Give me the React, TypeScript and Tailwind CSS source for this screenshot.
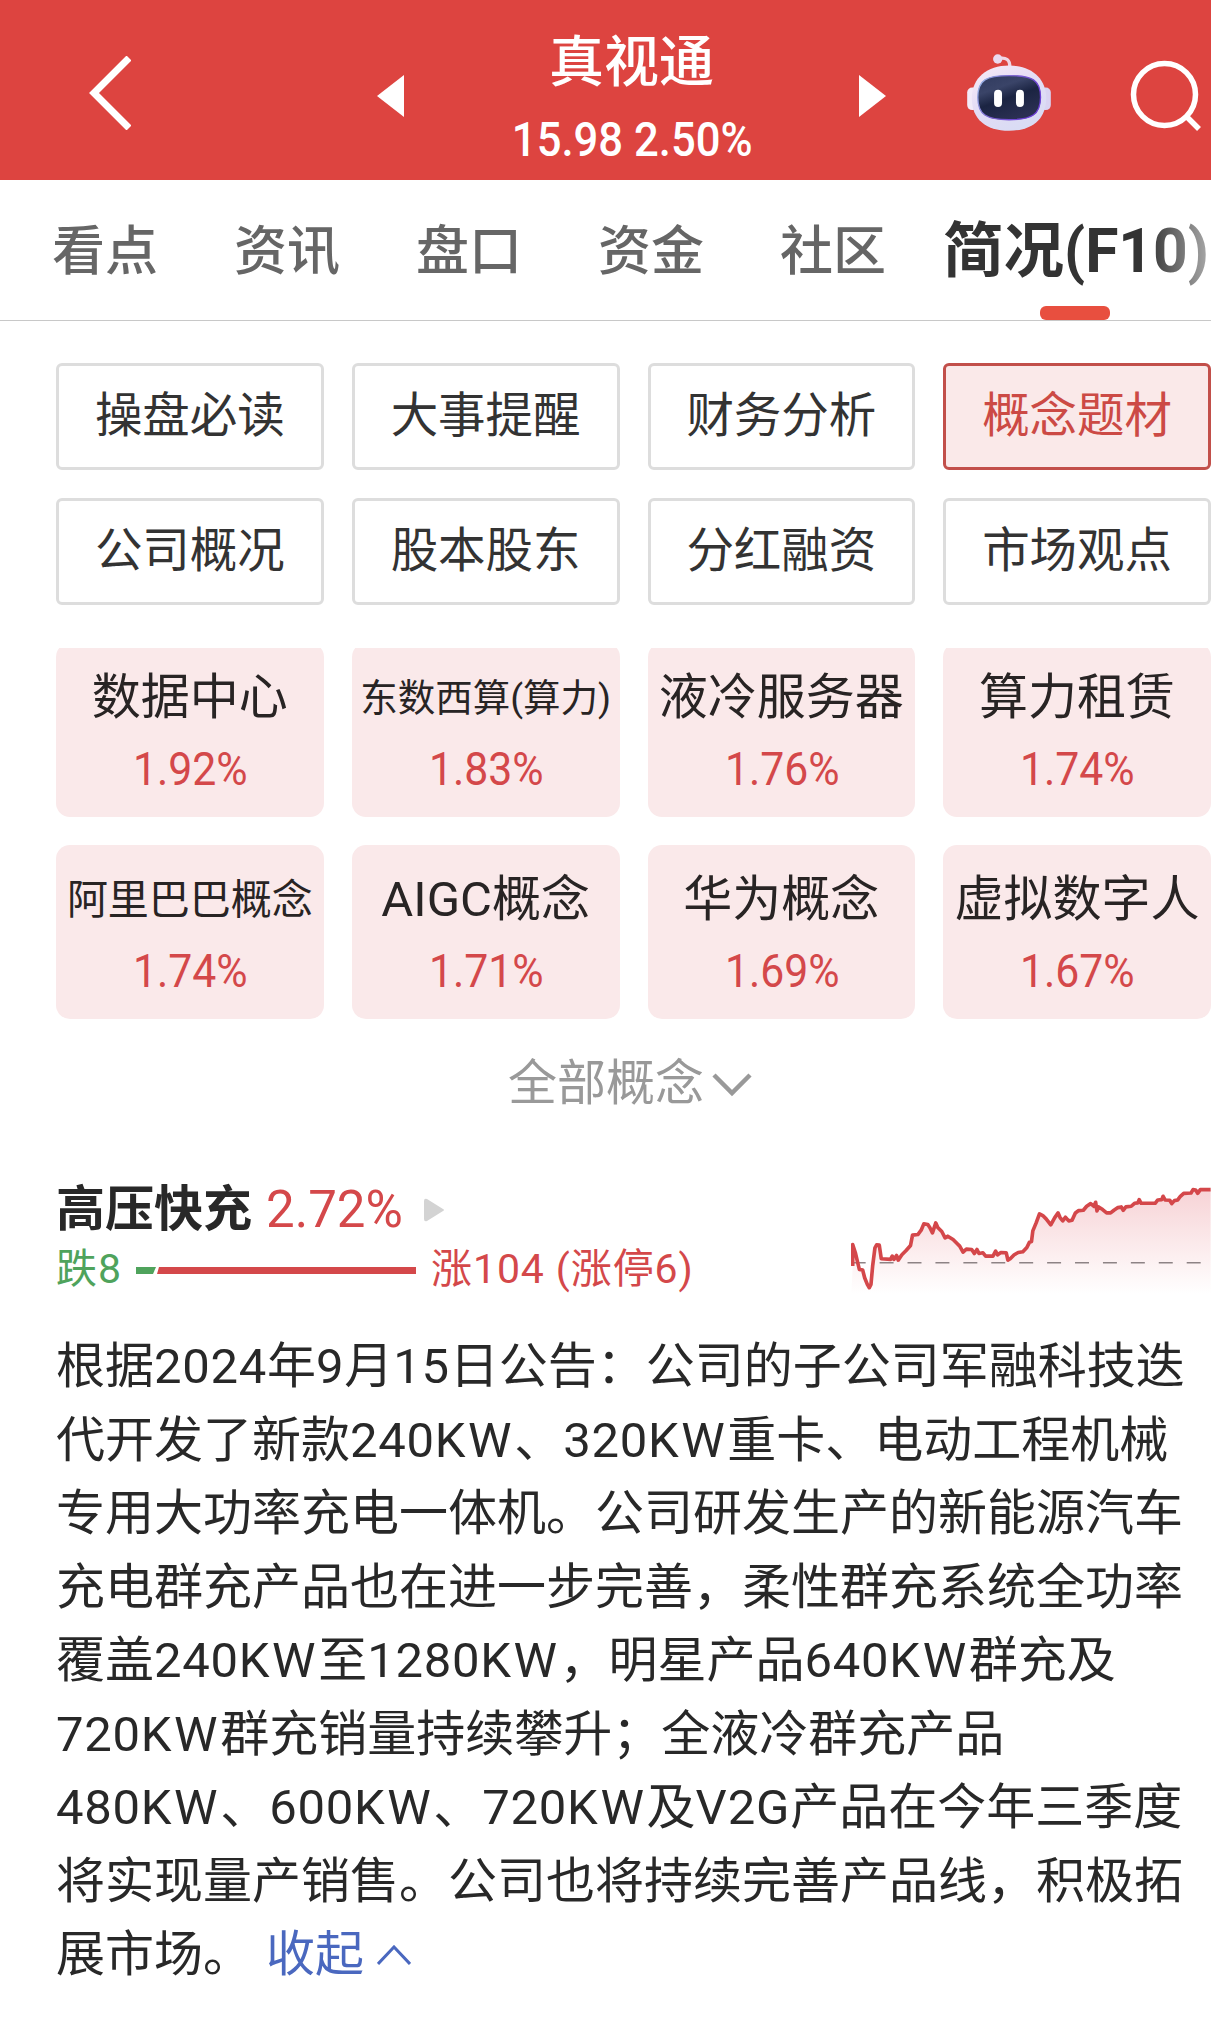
import clsx from "clsx";

const tabs = ["看点", "资讯", "盘口", "资金", "社区"];

const sections = [
  "操盘必读",
  "大事提醒",
  "财务分析",
  "概念题材",
  "公司概况",
  "股本股东",
  "分红融资",
  "市场观点",
];

const concepts = [
  { name: "数据中心", change: "1.92%", size: "text-[49px]" },
  { name: "东数西算(算力)", change: "1.83%", size: "text-[37.5px]" },
  { name: "液冷服务器", change: "1.76%", size: "text-[49px]" },
  { name: "算力租赁", change: "1.74%", size: "text-[49px]" },
  { name: "阿里巴巴概念", change: "1.74%", size: "text-[41px]" },
  { name: "AIGC概念", change: "1.71%", size: "text-[49px]" },
  { name: "华为概念", change: "1.69%", size: "text-[49px]" },
  { name: "虚拟数字人", change: "1.67%", size: "text-[49px]" },
];

const lines = [
  "根据2024年9月15日公告：公司的子公司军融科技迭",
  "代开发了新款240KW、320KW重卡、电动工程机械",
  "专用大功率充电一体机。公司研发生产的新能源汽车",
  "充电群充产品也在进一步完善，柔性群充系统全功率",
  "覆盖240KW至1280KW，明星产品640KW群充及",
  "720KW群充销量持续攀升；全液冷群充产品",
  "480KW、600KW、720KW及V2G产品在今年三季度",
  "将实现量产销售。公司也将持续完善产品线，积极拓",
  "展市场。",
];

const trend =
  "66,290 66,225 74,250 80,275 86,300 96,302 102,325 110,345 116,355 121,345 126,290 133,235 138,226 146,227 152,268 180,270 185,260 190,270 198,258 203,272 214,256 226,244 240,228 246,197 262,195 272,182 280,163 292,165 298,174 306,190 316,160 322,174 334,186 344,205 352,200 368,210 380,222 388,230 398,248 408,239 424,240 432,252 440,240 446,252 458,250 466,260 488,260 496,245 502,256 512,249 528,250 533,272 540,268 552,256 564,249 578,247 590,234 598,218 604,216 608,184 618,160 628,133 638,138 648,148 662,166 674,144 684,130 690,144 698,154 706,143 716,154 726,152 736,130 746,123 760,122 770,110 782,102 792,110 797,98 801,124 806,112 818,120 830,130 842,130 852,122 864,114 874,112 880,122 888,112 904,110 914,101 924,100 928,90 934,101 976,101 984,91 996,90 1000,80 1006,91 1020,92 1026,102 1034,93 1044,91 1052,80 1062,71 1084,70 1090,60 1098,61 1104,71 1112,60 1143,60";

function RobotIcon() {
  return (
    <svg viewBox="0 0 252 232" className="w-[84px] h-[77px]">
      <defs>
        <linearGradient id="shell" x1="0" y1="0" x2="0.6" y2="1">
          <stop offset="0" stopColor="#f8ecf7" />
          <stop offset="0.5" stopColor="#e4dcf5" />
          <stop offset="1" stopColor="#d9dcf4" />
        </linearGradient>
        <linearGradient id="visor" x1="0" y1="0" x2="0.5" y2="1">
          <stop offset="0" stopColor="#303a5e" />
          <stop offset="0.35" stopColor="#3a4468" />
          <stop offset="0.6" stopColor="#1b2442" />
          <stop offset="1" stopColor="#2a2f52" />
        </linearGradient>
        <linearGradient id="rim" x1="0" y1="0" x2="1" y2="0.4">
          <stop offset="0" stopColor="#9cc0e6" />
          <stop offset="0.5" stopColor="#7a5fd0" />
          <stop offset="1" stopColor="#6d3fd6" />
        </linearGradient>
      </defs>
      <path d="M92 14 C118 8 130 18 128 40" fill="none" stroke="#f0d5e4" strokeWidth="10" />
      <circle cx="92" cy="15" r="14" fill="#ead9ef" />
      <rect x="0" y="101" width="32" height="68" rx="15" fill="#f2eaf8" />
      <rect x="220" y="101" width="32" height="68" rx="15" fill="#d9d3f2" />
      <path
        d="M126 35 C192 35 238 72 238 133 C238 196 196 231 126 231 C56 231 14 196 14 133 C14 72 60 35 126 35Z"
        fill="url(#shell)"
      />
      <path
        d="M126 65 C196 65 221 78 221 130 C221 183 194 198 126 198 C58 198 32 183 32 130 C32 78 58 65 126 65Z"
        fill="url(#visor)"
        stroke="url(#rim)"
        strokeWidth="4"
      />
      <rect x="81" y="108" width="24" height="52" rx="12" fill="#fff" />
      <rect x="147" y="108" width="24" height="52" rx="12" fill="#fff" />
    </svg>
  );
}

function Header() {
  return (
    <header className="flex h-[180px] bg-[#dd4440] text-white">
      <svg viewBox="0 0 42 74" className="w-[42px] h-[74px] mt-[56px] ml-[89px]">
        <path d="M40 2 L5 37 L40 72" fill="none" stroke="#fff" strokeWidth="7" />
      </svg>
      <svg viewBox="0 0 27 42" className="w-[27px] h-[42px] mt-[75px] ml-[246px]">
        <path d="M27 0V42L0 21Z" fill="#fff" />
      </svg>
      <div className="flex flex-col items-center w-[455px] pt-[24px]">
        <div className="h-[77px] text-[55px] leading-[76px] font-medium">真视通</div>
        <div className="h-[80px] ml-[2px] text-[49px] leading-[80px] font-medium scale-x-[0.89] whitespace-nowrap">
          15.98 2.50%
        </div>
      </div>
      <svg viewBox="0 0 27 42" className="w-[27px] h-[42px] mt-[75px]">
        <path d="M0 0V42L27 21Z" fill="#fff" />
      </svg>
      <div className="mt-[54px] ml-[81px]">
        <RobotIcon />
      </div>
      <svg viewBox="0 0 72 72" className="w-[72px] h-[72px] mt-[60px] ml-[79px]">
        <circle cx="34.5" cy="34.5" r="31" fill="none" stroke="#fff" strokeWidth="5.5" />
        <path d="M56 56 L69 69" stroke="#fff" strokeWidth="5.5" />
      </svg>
    </header>
  );
}

function Tabs() {
  return (
    <nav className="relative flex h-[141px] border-b border-[#c8c8c8] pl-[52px] whitespace-nowrap">
      {tabs.map((tab) => (
        <div key={tab} className="w-[182px] text-[53px] leading-[144px] text-[#666] font-medium">
          {tab}
        </div>
      ))}
      <div className="-ml-[19px] text-[60.5px] leading-[144px] text-[#333] font-bold">简况(F10)</div>
      <div className="absolute left-[1040px] bottom-0 w-[70px] h-[14px] rounded-[6px] bg-[#e84f3f]" />
      <div className="absolute right-0 top-0 w-[64px] h-[120px] bg-linear-to-r from-white/0 to-white/60" />
    </nav>
  );
}

function ConceptCard({ name, change, size }: { name: string; change: string; size: string }) {
  return (
    <div className="h-[174px] rounded-[14px] bg-[#fae9ea] text-center whitespace-nowrap">
      <div className={clsx("h-[90px] pt-[12px] leading-[86px] text-[#282424]", size)}>{name}</div>
      <div className="pl-[1px] text-[46px] leading-[72px] text-[#d4484a] scale-x-[0.93]">{change}</div>
    </div>
  );
}

function TrendChart() {
  return (
    <svg viewBox="62 40 1081 340" className="w-[360px] h-[113px]">
      <defs>
        <linearGradient id="area" gradientUnits="userSpaceOnUse" x1="0" y1="60" x2="0" y2="375">
          <stop offset="0" stopColor="#f7d3d6" />
          <stop offset="1" stopColor="#fff" />
        </linearGradient>
      </defs>
      <polygon points={`62,375 ${trend} 1143,375`} fill="url(#area)" />
      <path d="M63 280H1143" stroke="#8d8385" strokeWidth="4" strokeDasharray="42 42" />
      <polyline points={trend} fill="none" stroke="#d4474a" strokeWidth="11" strokeLinejoin="round" />
    </svg>
  );
}

function BodyLine({ text }: { text: string }) {
  return (
    <>
      {text.split(/([0-9]+|[A-Z]+)/).map((part, i) => (
        <span
          key={i}
          className={clsx(
            /^[0-9]/.test(part) && "tracking-[0.7px]",
            /^[A-Z]/.test(part) && (part.length > 1 ? "tracking-[2.6px]" : "tracking-[1px]"),
          )}
        >
          {part}
        </span>
      ))}
    </>
  );
}

export default function App() {
  return (
    <div
      lang="zh-CN"
      className="w-[1211px] h-[2027px] overflow-hidden bg-white font-[Roboto,'Noto_Sans_CJK_SC',sans-serif]"
    >
      <Header />
      <Tabs />

      <div className="grid grid-cols-4 gap-x-[28px] gap-y-[28px] pl-[56px] mt-[42px]">
        {sections.map((name) => (
          <div
            key={name}
            className={clsx(
              "h-[107px] rounded-[6px] border-[3px] text-center text-[47.5px] leading-[101px]",
              name === "概念题材"
                ? "border-[#c24f4a] bg-[#fae9e9] text-[#cc4a45]"
                : "border-[#ddd] text-[#333]",
            )}
          >
            {name}
          </div>
        ))}
      </div>

      <div className="mt-[43px] pl-[56px] overflow-hidden">
        <div className="grid grid-cols-4 gap-[28px] -mt-[5px]">
          {concepts.map((c) => (
            <ConceptCard key={c.name} {...c} />
          ))}
        </div>
      </div>

      <div className="flex items-center h-[70px] mt-[28px] pl-[508px] text-[49px] leading-[70px] text-[#999]">
        <span className="pt-[3px]">全部概念</span>
        <svg viewBox="0 0 40 24" className="w-[40px] h-[24px] ml-[8px] mt-[5px]">
          <path d="M2 2 L20 20 L38 2" fill="none" stroke="#999" strokeWidth="4.5" />
        </svg>
      </div>

      <div className="flex justify-between h-[155px] mt-[54px] pl-[56px]">
        <div className="whitespace-nowrap">
          <div className="flex items-center h-[74px] pt-[4px]">
            <span className="text-[49px] font-bold text-[#282828]">高压快充</span>
            <span className="ml-[14px] text-[51px] text-[#d4484a]">2.72%</span>
            <svg viewBox="0 0 20 24" className="w-[20px] h-[24px] ml-[21px]">
              <path d="M0 3Q0 0 3 1L19 11Q21 12 19 13L3 23Q0 24 0 21Z" fill="#d3d3d3" />
            </svg>
          </div>
          <div className="flex items-center h-[50px] text-[41px] text-[#d4484a]">
            <span className="text-[#4fa35c] tracking-[1px]">跌8</span>
            <svg viewBox="0 0 280 7" className="w-[280px] h-[7px] ml-[14px]">
              <path d="M0 0H20L17 7H0Z" fill="#4fa35c" />
              <path d="M23 0H280V7H21Z" fill="#d4484a" />
            </svg>
            <span className="ml-[15px] tracking-[0.9px]">涨104 (涨停6)</span>
          </div>
        </div>
        <div className="mt-[12px]">
          <TrendChart />
        </div>
      </div>

      <div className="pt-[4px] pl-[56px] text-[49px] leading-[73.5px] text-[#282828] whitespace-nowrap">
        {lines.map((line, i) => (
          <div key={i} className="flex items-center h-[73.5px]">
            <div>
              <BodyLine text={line} />
            </div>
            {i === lines.length - 1 && (
              <div className="flex items-center ml-[14px] text-[#4a68bf]">
                收起
                <svg viewBox="0 0 34 20" className="w-[34px] h-[20px] ml-[13px]">
                  <path d="M1 19 L17 2 L33 19" fill="none" stroke="#4a68bf" strokeWidth="3" />
                </svg>
              </div>
            )}
          </div>
        ))}
      </div>
    </div>
  );
}
